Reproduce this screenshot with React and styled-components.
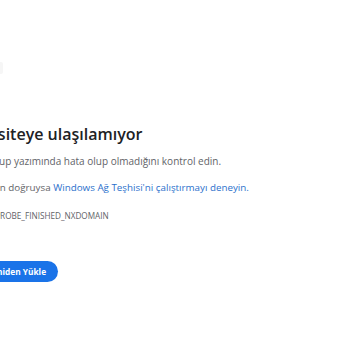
import React from "react";
import styled, { createGlobalStyle } from "styled-components";

const Global = createGlobalStyle`
  html, body {
    margin: 0;
    padding: 0;
    background: #fff;
    overflow: hidden;
  }
  body {
    width: 350px;
    height: 350px;
    font-family: "Open Sans", "Noto Sans", sans-serif;
  }
`;

const Page = styled.div`
  width: 350px;
  height: 350px;
  overflow: hidden;
  background: #fff;
`;

const Main = styled.div`
  margin-left: -25px;
  padding-top: 62px;
  display: flex;
  flex-direction: column;
  align-items: flex-start;
`;

const Icon = styled.div`
  width: 28px;
  height: 12px;
  margin-bottom: 49px;
  background: #f6f6f6;
  border-radius: 2px;
`;

const Title = styled.h1`
  margin: 0 0 9px -2px;
  font-size: 16px;
  font-weight: 600;
  line-height: 22px;
  color: #202124;
`;

const Line = styled.p`
  margin: 0 0 ${(p) => p.$gap}px;
  font-size: ${(p) => p.$size}px;
  line-height: 14px;
  color: #5f6368;
  white-space: nowrap;
`;

const Link = styled.span`
  color: #2b70cc;
`;

const Button = styled.button`
  height: 21px;
  padding: 0 12px;
  border: none;
  border-radius: 11px;
  background: #1a73e8;
  color: #fff;
  font-family: "Open Sans", "Noto Sans", sans-serif;
  font-size: 8.3px;
  font-weight: 700;
`;

export default function App() {
  return (
    <Page>
      <Global />
      <Main>
        <Icon />
        <Title>Bu siteye ulaşılamıyor</Title>
        <Line $size={10} $gap={13}>
          meetup yazımında hata olup olmadığını kontrol edin.
        </Line>
        <Line $size={9.8} $gap={14}>
          Kaydın doğruysa <Link>Windows Ağ Teşhisi'ni çalıştırmayı deneyin.</Link>
        </Line>
        <Line $size={8.2} $gap={38}>
          DNS_PROBE_FINISHED_NXDOMAIN
        </Line>
        <Button>Yeniden Yükle</Button>
      </Main>
    </Page>
  );
}
